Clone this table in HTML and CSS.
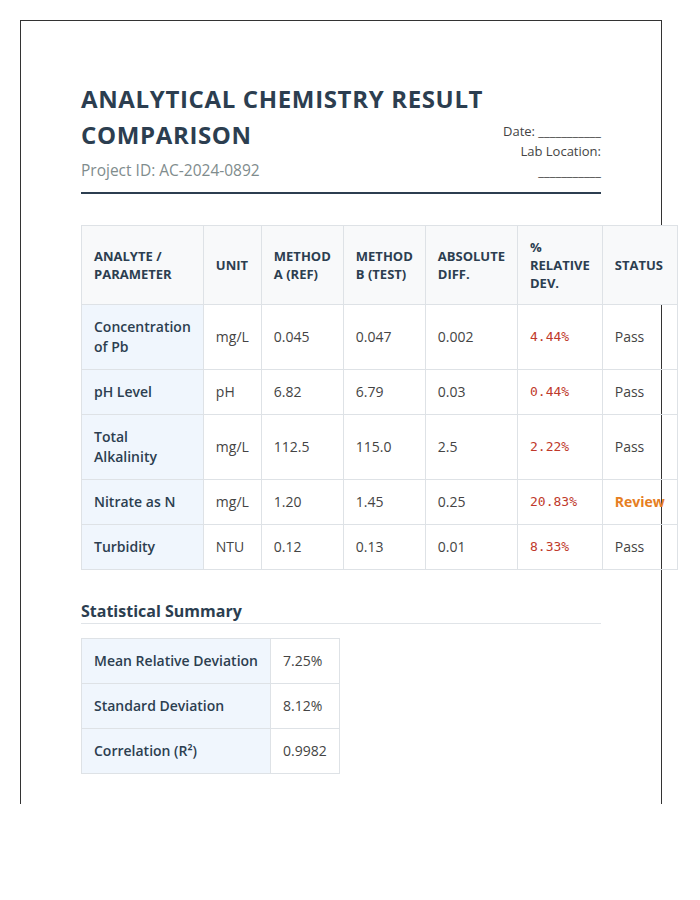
FILE: index.html
```html
<!DOCTYPE html>
<html lang="en">
<head>
    <meta charset="UTF-8">
    <meta name="viewport" content="width=device-width, initial-scale=1.0">
    <title>Analytical Chemistry Result Comparison</title>
    <link rel="stylesheet" href="styles.css">
</head>
<body>
    <div class="page">
        <header class="report-header">
            <div class="title-block">
                <h1>Analytical Chemistry Result Comparison</h1>
                <p class="project-id">Project ID: AC-2024-0892</p>
            </div>
            <div class="meta">
                <p>Date: ___________</p>
                <p>Lab Location: ___________</p>
            </div>
        </header>

        <table class="results">
            <thead>
                <tr>
                    <th>Analyte / Parameter</th>
                    <th>Unit</th>
                    <th>Method A (Ref)</th>
                    <th>Method B (Test)</th>
                    <th>Absolute Diff.</th>
                    <th>% Relative Dev.</th>
                    <th>Status</th>
                </tr>
            </thead>
            <tbody>
                <tr>
                    <td class="analyte">Concentration of Pb</td>
                    <td>mg/L</td>
                    <td>0.045</td>
                    <td>0.047</td>
                    <td>0.002</td>
                    <td class="dev">4.44%</td>
                    <td>Pass</td>
                </tr>
                <tr>
                    <td class="analyte">pH Level</td>
                    <td>pH</td>
                    <td>6.82</td>
                    <td>6.79</td>
                    <td>0.03</td>
                    <td class="dev">0.44%</td>
                    <td>Pass</td>
                </tr>
                <tr>
                    <td class="analyte">Total Alkalinity</td>
                    <td>mg/L</td>
                    <td>112.5</td>
                    <td>115.0</td>
                    <td>2.5</td>
                    <td class="dev">2.22%</td>
                    <td>Pass</td>
                </tr>
                <tr>
                    <td class="analyte">Nitrate as N</td>
                    <td>mg/L</td>
                    <td>1.20</td>
                    <td>1.45</td>
                    <td>0.25</td>
                    <td class="dev">20.83%</td>
                    <td class="review">Review</td>
                </tr>
                <tr>
                    <td class="analyte">Turbidity</td>
                    <td>NTU</td>
                    <td>0.12</td>
                    <td>0.13</td>
                    <td>0.01</td>
                    <td class="dev">8.33%</td>
                    <td>Pass</td>
                </tr>
            </tbody>
        </table>

        <section class="summary">
            <h3>Statistical Summary</h3>
            <table class="summary-table">
                <tr>
                    <td class="label">Mean Relative Deviation</td>
                    <td>7.25%</td>
                </tr>
                <tr>
                    <td class="label">Standard Deviation</td>
                    <td>8.12%</td>
                </tr>
                <tr>
                    <td class="label">Correlation (R²)</td>
                    <td>0.9982</td>
                </tr>
            </table>
        </section>
    </div>
</body>
</html>
```

FILE: styles.css
```css
* {
    margin: 0;
    padding: 0;
    box-sizing: border-box;
}

body {
    font-family: 'Open Sans', sans-serif;
    background: #fff;
    color: #333;
    padding: 20px;
}

.page {
    width: 642px;
    padding: 60px 60px 30px;
    border: 1px solid #333;
    border-bottom: none;
}

/* cabecera */
.report-header {
    display: flex;
    justify-content: space-between;
    align-items: flex-end;
    padding-bottom: 11px;
    border-bottom: 2px solid #2c3e50;
    margin-bottom: 31px;
}

.report-header h1 {
    font-size: 24px;
    line-height: 36px;
    font-weight: 700;
    color: #2c3e50;
    text-transform: uppercase;
    letter-spacing: 0.65px;
}

.project-id {
    font-size: 15.5px;
    color: #7f8c8d;
    margin-top: 6px;
}

.meta {
    width: 100px;
    flex-shrink: 0;
    text-align: right;
    font-size: 13px;
    line-height: 20px;
    color: #444;
}

/* tabla principal */
.results {
    border-collapse: collapse;
    font-size: 14px;
}

.results th,
.results td {
    border: 1px solid #dee2e6;
    padding: 12px;
    text-align: left;
    line-height: 20px;
}

.results th {
    background: #f8f9fa;
    color: #2c3e50;
    font-size: 13px;
    line-height: 18px;
    font-weight: 700;
    text-transform: uppercase;
}

.results td {
    color: #444;
}

.results td.analyte {
    background: #f0f6fd;
    color: #2c3e50;
    font-weight: 600;
}

.results td.dev {
    font-family: 'DejaVu Sans Mono', monospace;
    font-size: 13px;
    color: #c0392b;
}

.results td.review {
    color: #e67e22;
    font-weight: 700;
}

/* resumen */
.summary {
    margin-top: 30px;
}

.summary h3 {
    font-size: 16px;
    font-weight: 700;
    color: #2c3e50;
    padding-bottom: 1px;
    border-bottom: 1px solid #e0e4e8;
    margin-bottom: 14px;
}

.summary-table {
    border-collapse: collapse;
    font-size: 14px;
}

.summary-table td {
    border: 1px solid #dee2e6;
    padding: 12px;
    line-height: 20px;
    color: #444;
}

.summary-table td.label {
    background: #f0f6fd;
    color: #2c3e50;
    font-weight: 600;
}
```
